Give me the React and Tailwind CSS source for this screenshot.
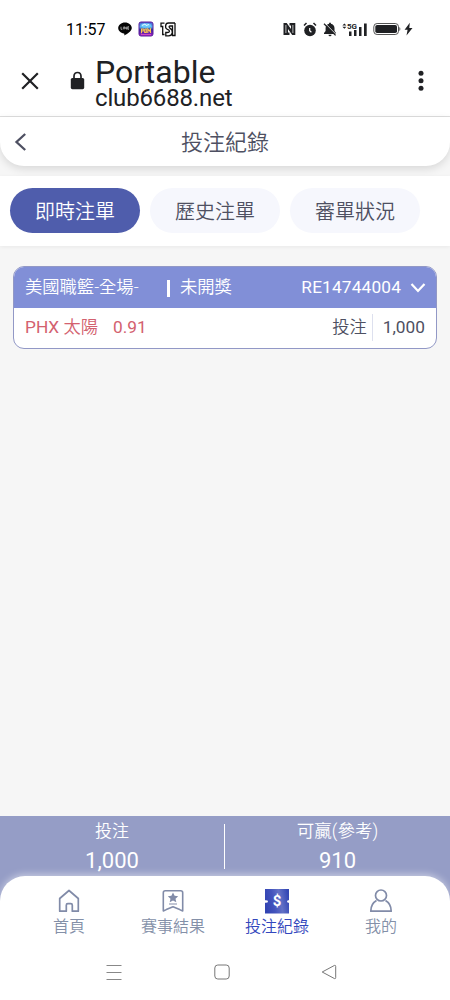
import React from "react";

function StatusBar() {
  return (
    <div className="flex h-[58px] items-center pl-[66px] pr-[37px] text-[#202124]">
      <span className="w-[40px] whitespace-nowrap pt-[1px] text-[16px] leading-none tracking-[-0.1px] text-black">11:57</span>
      <svg className="ml-[12px] h-[14px] w-[14px] shrink-0" viewBox="0 0 14 14">
        <path d="M7 .5C3.2.5.2 3 .2 6c0 2.700 2.400 5 5.700 5.400.8.200.4 1.200.4 2.100 1.500-.7 7.500-4 7.500-7.500C13.800 3 10.800.5 7 .5z" fill="#050505" />
        <path d="M3 4.700v2.600h1.300M5.400 4.700v2.600M6.600 7.300V4.700L8.400 7.300V4.700M11 4.700H9.700v2.600H11M9.700 6H11" fill="none" stroke="#ddd" strokeWidth=".65" />
      </svg>
      <svg className="ml-[6px] h-[16px] w-[16px] shrink-0" viewBox="0 0 16 16">
        <defs>
          <linearGradient id="game" x1="0" y1="0" x2="0" y2="1">
            <stop offset="0" stopColor="#4a52cf" />
            <stop offset=".35" stopColor="#57b9f3" />
            <stop offset=".55" stopColor="#2b2a97" />
            <stop offset="1" stopColor="#a318c4" />
          </linearGradient>
        </defs>
        <rect x="1" y="1" width="14" height="14" rx="2" fill="url(#game)" stroke="#5b1f9c" strokeWidth="1" />
        <ellipse cx="8" cy="4.500" rx="5" ry="2.300" fill="#69c8fa" />
        <path d="M4 4.500l3-1.500 1 1.500 3-1" stroke="#e5faff" strokeWidth="1" fill="none" />
        <path d="M3.500 12.300V8h1.800v2H3.500M6.700 8v3.500h1.600V8H6.700M9.800 12V8l1.500 2L12.500 8v4" stroke="#ffc454" strokeWidth="1.100" fill="none" />
        <path d="M3 13.600h10" stroke="#e85cc8" strokeWidth=".8" />
      </svg>
      <svg className="ml-[6px] h-[15px] w-[16px] shrink-0" viewBox="0 0 16 15" fill="none" stroke="#111" strokeWidth="1.300">
        <path d="M4.500 1.200H1v3.300h1.700V12.500h1.800M15 1H8.500C4.800 1 4.800 6.500 7.500 7.400c2.700.7 2.500 3.100-.2 3.100H5.800v3.300h2.700c4.500 0 5-5.500 1.700-7.400C8.500 5 8.800 4 10.500 4h2v9.500M15 1v12.500h-3" />
      </svg>
      <div className="flex-1" />
      <svg className="h-[14px] w-[13px] shrink-0" viewBox="0 0 13 14">
        <path d="M.5 1h3.200l4.300 6V3.500H6.500V1H12.300v12H9.200L5 7v3.500h1.500V13H.5z" fill="#202124" />
        <path d="M2.900 3v8M9.900 3v8" stroke="white" strokeWidth=".7" />
      </svg>
      <svg className="ml-[7px] h-[15px] w-[14px] shrink-0" viewBox="0 0 14 15">
        <circle cx="7" cy="8.500" r="5.800" fill="#202124" />
        <path d="M1 3.500L3.500 1M13 3.500L10.500 1" stroke="#202124" strokeWidth="1.500" />
        <path d="M6.700 6v2.800l1.700 1.400" fill="none" stroke="white" strokeWidth="1.200" />
      </svg>
      <svg className="ml-[6px] h-[15px] w-[14px] shrink-0" viewBox="0 0 14 15">
        <path d="M1 12V11l1.600-2V6c0-2 1.500-3.800 3.500-4.200V.8h1.800v1C10 2.200 11.500 4 11.500 6v3l1.500 2v1zM5.500 12.800h3a1.500 1.500 0 0 1-3 0z" fill="#202124" />
        <path d="M1.800 1.200l12 12" stroke="white" strokeWidth="1" />
        <path d="M1 1.800l11.600 11.600" stroke="#202124" strokeWidth="1.300" />
      </svg>
      <svg className="ml-[5px] h-[15px] w-[26px] shrink-0" viewBox="0 0 26 15" fill="#202124">
        <path d="M.4 3.500L2.400 1.500 4.400 3.500zM.4 4.800l2 2 2-2z" />
        <text x="5" y="6.800" fontFamily="Roboto, sans-serif" fontWeight="700" fontSize="8">5G</text>
        <path d="M7 9.500h2.500v4.500H7zM12 8h2.500v6H12zM17 5h2.500v9H17zM22 1.500h2.700V14H22z" />
      </svg>
      <svg className="ml-[5px] h-[14px] w-[28px] shrink-0" viewBox="0 0 28 14">
        <rect x=".8" y="1.500" width="24.700" height="11" rx="3.300" fill="none" stroke="#555" strokeWidth="1" />
        <rect x="2.300" y="3" width="21.700" height="8" rx="1.800" fill="#202124" />
        <path d="M26.500 5v4c1-.5 1-3.500 0-4z" fill="#202124" />
      </svg>
      <svg className="ml-[3px] h-[14px] w-[9px] shrink-0" viewBox="0 0 9 14" fill="#202124">
        <path d="M5.800.8L.6 7.800h3L2.500 13.500 8.500 6H5.300z" />
      </svg>
    </div>
  );
}

function BrowserBar() {
  return (
    <div className="flex h-[59px] border-b border-[#dedede] pb-[8px] text-[#202124]">
      <svg className="ml-[21px] mt-[14px] h-[18px] w-[18px] shrink-0" viewBox="0 0 18 18" stroke="#202124" strokeWidth="2.200">
        <path d="M1.200 1.200l15.600 15.600M16.800 1.200L1.200 16.800" />
      </svg>
      <svg className="ml-[31px] mt-[13px] h-[19px] w-[15px] shrink-0" viewBox="0 0 15 19">
        <path d="M4 8V5.300C4 .2 11 .2 11 5.300V8" fill="none" stroke="#202124" strokeWidth="1.700" />
        <rect x=".8" y="7" width="13.400" height="11.200" rx="1.600" fill="#202124" />
      </svg>
      <div className="ml-[10px] flex-1 whitespace-nowrap">
        <div className="h-[29px] text-[32px] leading-[28px]">Portable</div>
        <div className="text-[24px] leading-[22px] tracking-[-0.15px]">club6688.net</div>
      </div>
      <svg className="mr-[26px] mt-[12px] h-[22px] w-[6px] shrink-0" viewBox="0 0 6 22" fill="#202124">
        <circle cx="3" cy="3.200" r="2.500" />
        <circle cx="3" cy="10.800" r="2.500" />
        <circle cx="3" cy="18.300" r="2.500" />
      </svg>
    </div>
  );
}

const tabs = ["即時注單", "歷史注單", "審單狀況"];

function Tabs() {
  return (
    <div className="mt-[10px] flex h-[70px] gap-[10px] bg-white px-[10px] pt-[12px] shadow-[0_1px_4px_rgba(0,0,0,0.06)]">
      {tabs.map((label, i) => (
        <button
          key={label}
          className={
            i === 0
              ? "h-[45px] w-[130px] rounded-full bg-[#4f5dac] pt-[2px] text-[20px] font-[350] text-white"
              : "h-[45px] w-[130px] rounded-full bg-[#f6f7fd] pt-[2px] text-[20px] font-[350] text-[#4e5062]"
          }
        >
          {label}
        </button>
      ))}
    </div>
  );
}

function BetCard() {
  return (
    <div className="mx-[13px] mt-[20px] h-[83px] overflow-hidden rounded-[11px] border-[1.5px] border-[#9298c6] bg-white text-[17.3px]">
      <div className="flex h-[41px] items-center bg-[#818fd7] pl-[11px] pr-[10px] pt-[1px] text-white">
        <span className="w-[142px] whitespace-nowrap font-[350]">美國職籃-全場-</span>
        <span className="mr-[10px] h-[17px] w-[3px] bg-white" />
        <span className="font-[350]">未開獎</span>
        <span className="ml-auto tracking-[0.15px]">RE14744004</span>
        <svg className="ml-[9px] h-[12px] w-[16px]" viewBox="0 0 16 12" fill="none" stroke="white" strokeWidth="2.200">
          <path d="M1.500 2l6.500 7 6.500-7" />
        </svg>
      </div>
      <div className="flex h-[39px] items-center pl-[11px] pr-[11px] text-[#4e5062]">
        <span className="text-[#d3616f]">
          PHX <span className="font-[350]">太陽</span>
        </span>
        <span className="ml-[15px] text-[#d3616f]">0.91</span>
        <span className="ml-auto font-[350]">投注</span>
        <span className="ml-[5px] mr-[10px] h-[27px] w-px bg-[#dde0ee]" />
        <span>1,000</span>
      </div>
    </div>
  );
}

function HomeIcon() {
  return (
    <svg className="h-[26px] w-[26px]" viewBox="0 0 26 26" fill="none" stroke="#818ba8" strokeWidth="1.700">
      <path d="M3.700 10.500L13 2.500l9.300 8v12.700h-6v-6q0-1.500-1.500-1.500h-3q-1.500 0-1.500 1.500v6H3.700z" strokeLinejoin="round" />
    </svg>
  );
}

function ResultIcon() {
  return (
    <svg className="h-[26px] w-[26px]" viewBox="0 0 26 26" fill="none" stroke="#818ba8" strokeWidth="1.600">
      <path d="M5.300 2.700h15.400q2 0 2 2V23l-3-1.400L13 18.800l-6.700 2.800-3 1.400V4.700q0-2 2-2z" strokeLinejoin="round" />
      <path d="M13 4.600l1.600 3.200 3.600.5-2.700 2.400.8 3.600-3.300-1.800-3.300 1.800.8-3.600-2.700-2.400 3.600-.5z" fill="#818ba8" stroke="none" />
      <path d="M9 16h8" strokeWidth="1" />
    </svg>
  );
}

function TicketIcon() {
  return (
    <svg className="h-[26px] w-[26px]" viewBox="0 0 26 26">
      <defs>
        <linearGradient id="ticket" x1="0" y1=".6" x2="1" y2=".4">
          <stop offset="0" stopColor="#3143b2" />
          <stop offset=".35" stopColor="#4354bd" />
          <stop offset=".65" stopColor="#6371c6" />
          <stop offset="1" stopColor="#3447b5" />
        </linearGradient>
      </defs>
      <path d="M1 1h24v11.300q-1.500-.5-2 1.200 .5 1.700 2 1.200V25.500H1V14.700q3 .3 3-1.200t-3-1.200z" fill="url(#ticket)" />
      <text x="13" y="18.300" textAnchor="middle" fontFamily="Roboto, sans-serif" fontSize="15" fontWeight="700" fill="white">$</text>
    </svg>
  );
}

function PersonIcon() {
  return (
    <svg className="h-[26px] w-[26px]" viewBox="0 0 26 26" fill="none" stroke="#818ba8" strokeWidth="1.700">
      <circle cx="13" cy="7.500" r="5.500" />
      <path d="M8.500 12.500C5 14.500 2.800 18 2.800 23.200h20.400c0-5.200-2.200-8.700-5.700-10.700" strokeLinejoin="round" />
    </svg>
  );
}

const navItems = [
  { label: "首頁", Icon: HomeIcon },
  { label: "賽事結果", Icon: ResultIcon },
  { label: "投注紀錄", Icon: TicketIcon, active: true },
  { label: "我的", Icon: PersonIcon },
];

function BottomNav() {
  return (
    <div className="h-[124px] rounded-t-[25px] bg-white shadow-[0_-2px_7px_rgba(255,255,255,0.45)]">
      <div className="flex px-[17px] pt-[12px]">
        {navItems.map(({ label, Icon, active }) => (
          <div
            key={label}
            className={
              active
                ? "flex w-[104px] flex-col items-center text-[#3347bd]"
                : "flex w-[104px] flex-col items-center text-[#8490a8]"
            }
          >
            <Icon />
            <span className="mt-[2px] text-[16px] font-[350] leading-[22px]">{label}</span>
          </div>
        ))}
      </div>
      <div className="flex items-center pl-[106px] pt-[26px]">
        <svg className="h-[16px] w-[16px]" viewBox="0 0 16 16" stroke="#888" strokeWidth="1">
          <path d="M.5 1.500h15M.5 8.500h15M.5 15.500h15" />
        </svg>
        <svg className="ml-[92px] h-[16px] w-[16px]" viewBox="0 0 16 16" fill="none" stroke="#777" strokeWidth="1">
          <rect x=".8" y="1" width="14.400" height="14" rx="3" />
        </svg>
        <svg className="ml-[91px] h-[16px] w-[16px]" viewBox="0 0 16 16" fill="none" stroke="#777" strokeWidth="1">
          <path d="M13.500 1.400L1.200 8l12.300 6.600q1.200.3 1.200-.9V2.300q0-1.200-1.200-.9z" strokeLinejoin="round" />
        </svg>
      </div>
    </div>
  );
}

export default function App() {
  return (
    <div className="flex h-[1000px] w-[450px] flex-col overflow-hidden bg-[#f6f6f6] font-[Roboto,'Noto_Sans_CJK_TC',sans-serif]">
      <div className="bg-white">
        <StatusBar />
        <BrowserBar />
      </div>
      <header className="flex h-[49px] items-center rounded-b-[24px] bg-white px-[14px] shadow-[0_3px_8px_rgba(0,0,0,0.12)]">
        <svg className="h-[18px] w-[13px]" viewBox="0 0 13 18" fill="none" stroke="#4e5062" strokeWidth="2.300">
          <path d="M11.200 1L2.500 9l8.700 8" />
        </svg>
        <h1 className="flex-1 pr-[13px] pt-[2px] text-center text-[22px] font-[350] leading-none text-[#4e5062]">投注紀錄</h1>
      </header>
      <Tabs />
      <BetCard />
      <div className="flex-1" />
      <footer className="bg-[#959dc6]">
        <div className="flex h-[60px] items-center text-white">
          <div className="w-[224px] text-center">
            <div className="h-[29px] text-[17px] font-[350] leading-[29px]">投注</div>
            <div className="text-[22px] leading-[30px]">1,000</div>
          </div>
          <div className="h-[45px] w-px bg-white" />
          <div className="flex-1 text-center">
            <div className="h-[29px] text-[17.500px] font-[350] leading-[29px]">可贏(參考)</div>
            <div className="text-[22px] leading-[30px]">910</div>
          </div>
        </div>
        <BottomNav />
      </footer>
    </div>
  );
}
